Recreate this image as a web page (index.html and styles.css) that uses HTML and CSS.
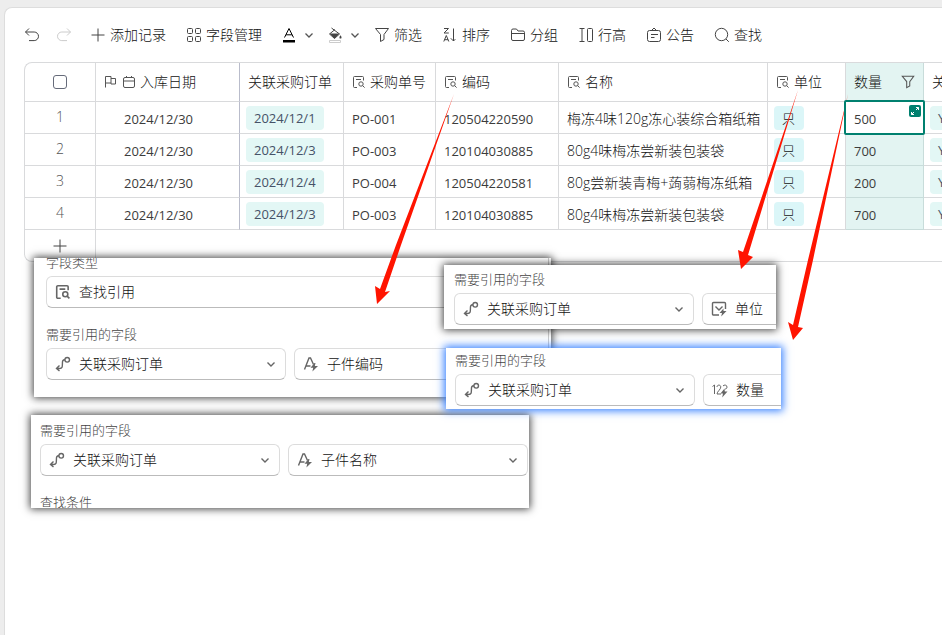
FILE: index.html
```html
<!DOCTYPE html>
<html lang="zh-CN">
<head>
    <meta charset="UTF-8">
    <meta name="viewport" content="width=device-width, initial-scale=1.0">
    <title>入库记录</title>
    <link rel="stylesheet" href="styles.css">
</head>
<body>
    <svg class="sprite" aria-hidden="true">
        <symbol id="undo" viewBox="0 0 16 16"><path d="M5 1.500L1.500 5 5 8.500M1.500 5h8.700a4.300 4.300 0 0 1 0 8.600H5"/></symbol>
        <symbol id="redo" viewBox="0 0 16 16"><path d="M11 1.500L14.500 5 11 8.500M14.500 5H5.800a4.300 4.300 0 0 0 0 8.600H11"/></symbol>
        <symbol id="plus" viewBox="0 0 16 16"><path d="M8 1.500v13M1.500 8h13"/></symbol>
        <symbol id="grid" viewBox="0 0 16 16"><rect x="1.500" y="1.500" width="5" height="5" rx="1"/><rect x="9.500" y="1.500" width="5" height="5" rx="1"/><rect x="1.500" y="9.500" width="5" height="5" rx="1"/><rect x="9.500" y="9.500" width="5" height="5" rx="1"/></symbol>
        <symbol id="font" viewBox="0 0 16 16"><path d="M2.500 10.500L7 1.500l4.500 9M4 7.800h6"/><path class="solid" d="M1 13h12v2.500H1z"/></symbol>
        <symbol id="fill" viewBox="0 0 16 16"><path d="M3.500 1l8 6-5 4.500L1.500 7l5.500-4.500"/><path class="solid" d="M1.500 6.500h10l-5 5zM12.500 8.200c1.600 2 1.200 3.400 0 3.400s-1.600-1.400 0-3.400z"/><path class="pale" d="M1.500 13.500h11v2h-11z"/></symbol>
        <symbol id="chevron" viewBox="0 0 14 14"><path d="M3.500 5.500L7 9l3.500-3.500"/></symbol>
        <symbol id="funnel" viewBox="0 0 16 16"><path d="M1.500 1.500h13l-4.500 6v5L6.500 14.500v-7z"/></symbol>
        <symbol id="sort" viewBox="0 0 16 16"><path d="M2 1.500h4.500L2 6h4.800M1.800 14.500l2.500-6 2.500 6M2.600 12.700h3.500M11.500 1.500v12.500M8.800 11.300l2.700 2.700 1.800-1.800"/></symbol>
        <symbol id="folder" viewBox="0 0 16 16"><path d="M1.500 12V3.500a1.500 1.500 0 0 1 1.500-1.500h3.500l1.500 2h5a1.500 1.500 0 0 1 1.500 1.500V12a1.500 1.500 0 0 1-1.500 1.500H3A1.500 1.500 0 0 1 1.500 12zM1.500 6.500h13"/></symbol>
        <symbol id="height" viewBox="0 0 16 16"><path d="M1.500 1.500h5M1.500 14.500h5M4 1.500v13"/><rect x="9.500" y="1.500" width="5" height="13" rx="1"/></symbol>
        <symbol id="notice" viewBox="0 0 16 16"><rect x="1.500" y="3.500" width="13" height="11" rx="2"/><path d="M5.500 3.500L8 1l2.500 2.500M5 7.500h7M5 10.500h3.500"/></symbol>
        <symbol id="search" viewBox="0 0 16 16"><circle cx="7.500" cy="7.500" r="6.200"/><path d="M12 12l2.800 2.800"/></symbol>
        <symbol id="flag" viewBox="0 0 14 14"><path d="M1.500 12.500v-11h5.500v6.500H1.500M7 3.500h4.500v5.500H7V8"/></symbol>
        <symbol id="calendar" viewBox="0 0 14 14"><rect x="1.500" y="2.500" width="11" height="10" rx="1.500"/><path d="M1.500 6h11M4.500 1v2M9.500 1v2"/></symbol>
        <symbol id="lookup" viewBox="0 0 14 14"><path d="M5 12.500H2.500a1 1 0 0 1-1-1v-9a1 1 0 0 1 1-1h8a1 1 0 0 1 1 1v3M4 4.500h5"/><circle cx="9" cy="9" r="2.200"/><path d="M10.600 10.600l2 2"/></symbol>
        <symbol id="link" viewBox="0 0 16 16"><circle cx="12.200" cy="3.800" r="2.300"/><path d="M10 3.800c-2.600 0-2.600 1.500-2.600 4.200s0 4.500-2.800 4.500H1.500M4.500 9.500l-3 3 3 2.500"/></symbol>
        <symbol id="textref" viewBox="0 0 16 16"><path d="M1.500 13.500L6 2h1.500l3 6.500M3 10h4.500"/><path class="solid" d="M11.500 7l-4 4.800h2.700l-.8 3.700 5.600-5.500h-3.200l.7-3z"/></symbol>
        <symbol id="optref" viewBox="0 0 16 16"><path d="M8 14H2.500a1 1 0 0 1-1-1V2.500a1 1 0 0 1 1-1h11a1 1 0 0 1 1 1V8M4.500 5.500l3.500 3.500 3.500-3.500"/><path class="solid" d="M12.500 7.500l-4 4.500h2.500l-.8 3.500 5.300-5.500h-3z"/></symbol>
        <symbol id="numref" viewBox="0 0 16 16"><path d="M.5 4.500L2.500 3v9M5 5c0-2.500 3.800-2.500 3.800 0C8.800 7.500 5 9.500 5 12h4M11 4c1-1.500 4-1.200 4 1 0 1.500-1 2-2 2"/><path class="solid" d="M12.500 6.500l-4 5h2.500l-.8 4 5.300-6h-2.700z"/></symbol>
        <symbol id="expand" viewBox="0 0 12 12"><path d="M7 2.500h2.500V5M9.500 2.500L7 5M5 9.500H2.500V7M2.500 9.500L5 7"/></symbol>
    </svg>

    <main class="panel">
        <div class="toolbar">
            <div class="history">
                <button class="tool" aria-label="撤销"><svg class="icon"><use href="#undo"/></svg></button>
                <button class="tool" aria-label="重做" disabled><svg class="icon"><use href="#redo"/></svg></button>
            </div>
            <button class="tool"><svg class="icon"><use href="#plus"/></svg>添加记录</button>
            <button class="tool"><svg class="icon"><use href="#grid"/></svg>字段管理</button>
            <button class="tool color" aria-label="字体颜色"><svg class="icon black"><use href="#font"/></svg><svg class="icon-sm"><use href="#chevron"/></svg></button>
            <button class="tool color" aria-label="填充颜色"><svg class="icon"><use href="#fill"/></svg><svg class="icon-sm"><use href="#chevron"/></svg></button>
            <button class="tool"><svg class="icon"><use href="#funnel"/></svg>筛选</button>
            <button class="tool"><svg class="icon"><use href="#sort"/></svg>排序</button>
            <button class="tool"><svg class="icon"><use href="#folder"/></svg>分组</button>
            <button class="tool"><svg class="icon"><use href="#height"/></svg>行高</button>
            <button class="tool"><svg class="icon"><use href="#notice"/></svg>公告</button>
            <button class="tool"><svg class="icon"><use href="#search"/></svg>查找</button>
        </div>

        <div class="sheet">
            <table>
                <colgroup>
                    <col class="w-index"><col class="w-date"><col class="w-order"><col class="w-po"><col class="w-code"><col class="w-name"><col class="w-unit"><col class="w-qty"><col class="w-more">
                </colgroup>
                <thead>
                    <tr>
                        <th class="index"><input type="checkbox" aria-label="全选"></th>
                        <th class="frozen"><div class="head"><svg class="icon-sm"><use href="#flag"/></svg><svg class="icon-sm"><use href="#calendar"/></svg>入库日期</div></th>
                        <th><div class="head">关联采购订单</div></th>
                        <th><div class="head"><svg class="icon-sm"><use href="#lookup"/></svg>采购单号</div></th>
                        <th><div class="head"><svg class="icon-sm"><use href="#lookup"/></svg>编码</div></th>
                        <th><div class="head"><svg class="icon-sm"><use href="#lookup"/></svg>名称</div></th>
                        <th><div class="head"><svg class="icon-sm"><use href="#lookup"/></svg>单位</div></th>
                        <th class="qty"><div class="head spread">数量<svg class="icon-sm"><use href="#funnel"/></svg></div></th>
                        <th><div class="head">关</div></th>
                    </tr>
                </thead>
                <tbody>
                    <tr>
                        <td class="index">1</td>
                        <td class="date frozen">2024/12/30</td>
                        <td class="tags"><span class="chip">2024/12/1</span></td>
                        <td class="num">PO-001</td>
                        <td class="num">120504220590</td>
                        <td>梅冻4味120g冻心装综合箱纸箱</td>
                        <td class="tags"><span class="chip unit">只</span></td>
                        <td class="num qty selected">500<button class="expand" aria-label="展开"><svg><use href="#expand"/></svg></button></td>
                        <td class="tags"><span class="chip">Y</span></td>
                    </tr>
                    <tr>
                        <td class="index">2</td>
                        <td class="date frozen">2024/12/30</td>
                        <td class="tags"><span class="chip">2024/12/3</span></td>
                        <td class="num">PO-003</td>
                        <td class="num">120104030885</td>
                        <td>80g4味梅冻尝新装包装袋</td>
                        <td class="tags"><span class="chip unit">只</span></td>
                        <td class="num qty">700</td>
                        <td class="tags"><span class="chip">Y</span></td>
                    </tr>
                    <tr>
                        <td class="index">3</td>
                        <td class="date frozen">2024/12/30</td>
                        <td class="tags"><span class="chip">2024/12/4</span></td>
                        <td class="num">PO-004</td>
                        <td class="num">120504220581</td>
                        <td>80g尝新装青梅+蒟蒻梅冻纸箱</td>
                        <td class="tags"><span class="chip unit">只</span></td>
                        <td class="num qty">200</td>
                        <td class="tags"><span class="chip">Y</span></td>
                    </tr>
                    <tr>
                        <td class="index">4</td>
                        <td class="date frozen">2024/12/30</td>
                        <td class="tags"><span class="chip">2024/12/3</span></td>
                        <td class="num">PO-003</td>
                        <td class="num">120104030885</td>
                        <td>80g4味梅冻尝新装包装袋</td>
                        <td class="tags"><span class="chip unit">只</span></td>
                        <td class="num qty">700</td>
                        <td class="tags"><span class="chip">Y</span></td>
                    </tr>
                </tbody>
                <tfoot>
                    <tr>
                        <td class="index"><button class="add" aria-label="新增一行"><svg class="icon"><use href="#plus"/></svg></button></td>
                        <td colspan="8"></td>
                    </tr>
                </tfoot>
            </table>
        </div>
    </main>

    <!-- floating notes that show how each field is set up -->
    <section class="note note-code">
        <div class="note-body">
            <label class="caption" for="type">字段类型</label>
            <div class="row">
                <div class="picker wide"><svg class="icon"><use href="#lookup"/></svg><select id="type"><option>查找引用</option></select></div>
            </div>
            <label class="caption second" for="code-table">需要引用的字段</label>
            <div class="row">
                <div class="picker"><svg class="icon"><use href="#link"/></svg><select id="code-table"><option>关联采购订单</option></select><svg class="icon-sm"><use href="#chevron"/></svg></div>
                <div class="picker"><svg class="icon"><use href="#textref"/></svg><select aria-label="引用字段"><option>子件编码</option></select><svg class="icon-sm"><use href="#chevron"/></svg></div>
            </div>
        </div>
    </section>

    <section class="note note-name">
        <label class="caption" for="name-table">需要引用的字段</label>
        <div class="row">
            <div class="picker"><svg class="icon"><use href="#link"/></svg><select id="name-table"><option>关联采购订单</option></select><svg class="icon-sm"><use href="#chevron"/></svg></div>
            <div class="picker"><svg class="icon"><use href="#textref"/></svg><select aria-label="引用字段"><option>子件名称</option></select><svg class="icon-sm"><use href="#chevron"/></svg></div>
        </div>
        <div class="caption second">查找条件</div>
    </section>

    <section class="note note-unit">
        <label class="caption" for="unit-table">需要引用的字段</label>
        <div class="row">
            <div class="picker"><svg class="icon"><use href="#link"/></svg><select id="unit-table"><option>关联采购订单</option></select><svg class="icon-sm"><use href="#chevron"/></svg></div>
            <div class="picker"><svg class="icon"><use href="#optref"/></svg><select aria-label="引用字段"><option>单位</option></select></div>
        </div>
    </section>

    <section class="note note-qty">
        <label class="caption" for="qty-table">需要引用的字段</label>
        <div class="row">
            <div class="picker"><svg class="icon"><use href="#link"/></svg><select id="qty-table"><option>关联采购订单</option></select><svg class="icon-sm"><use href="#chevron"/></svg></div>
            <div class="picker"><svg class="icon thin"><use href="#numref"/></svg><select aria-label="引用字段"><option>数量</option></select></div>
        </div>
    </section>

    <svg class="arrows" width="942" height="400" aria-hidden="true">
        <path d="M454 94L396 245 380 289 375 286 377 304 390 291 385 292 401 245z"/>
        <path d="M798 90L743 252 738 250 741 269 753 257 748 255z"/>
        <path d="M848 94L808 260 793 325 788 322 793 340 803 328 798 327 813 260z"/>
    </svg>
</body>
</html>
```
FILE: styles.css
```css
* {
    box-sizing: border-box;
}
body {
    margin: 0;
    position: relative;
    min-height: 100vh;
    overflow: hidden;
    background: #ededed;
    color: #111;
    font-family: "Open Sans", "Noto Sans CJK SC", sans-serif;
    font-size: 14px;
    font-weight: 300;
    line-height: 20px;
}
button, select, input {
    margin: 0;
    padding: 0;
    border: none;
    background: none;
    color: inherit;
    font: inherit;
}
.sprite {
    position: absolute;
    width: 0;
    height: 0;
}
svg {
    flex: none;
    fill: none;
    stroke: currentColor;
    stroke-width: 1;
}
.solid {
    fill: currentColor;
    stroke: none;
}
.pale {
    stroke: #ccc;
}
.icon {
    width: 16px;
    height: 16px;
    color: #444;
}
.icon-sm {
    width: 14px;
    height: 14px;
    color: #555;
}
.black {
    color: #000;
}

.panel {
    margin: 7px 0 0 4px;
    min-height: calc(100vh - 7px);
    padding-left: 19px;
    border: 1px solid #ddd;
    border-right: none;
    border-bottom: none;
    border-radius: 8px 0 0 0;
    background: #fff;
}

/* toolbar */
.toolbar {
    display: flex;
    align-items: center;
    gap: 20px;
    height: 54px;
}
.history {
    display: flex;
    gap: 16px;
    margin-right: -2px;
}
.tool {
    display: flex;
    align-items: center;
    gap: 4px;
    white-space: nowrap;
}
.tool:disabled .icon {
    color: #ccc;
}
.tool.color {
    margin-right: -8px;
}
.tool .icon-sm {
    stroke-width: 1.3;
}

/* table */
.sheet {
    overflow: hidden;
    border: 1px solid #d9dadc;
    border-right: none;
    border-radius: 8px 0 0 8px;
}
table {
    width: 1020px;
    table-layout: fixed;
    border-spacing: 0;
}
.w-index { width: 71px; }
.w-date { width: 144px; }
.w-order { width: 104px; }
.w-po { width: 92px; }
.w-code { width: 123px; }
.w-name { width: 209px; }
.w-unit { width: 78px; }
.w-qty { width: 78px; }
th, td {
    position: relative;
    height: 32px;
    padding: 2px 0 0 8px;
    border-right: 1px solid #d9dadc;
    border-bottom: 1px solid #d9dadc;
    text-align: left;
    font-weight: 300;
    white-space: nowrap;
}
th {
    height: 39px;
    padding-top: 0;
}
.frozen {
    border-right-color: #b9bccb;
}
.head {
    display: flex;
    align-items: center;
    gap: 4px;
}
.spread {
    justify-content: space-between;
    padding-right: 8px;
}
.spread .icon-sm {
    stroke-width: 1.2;
}
.index {
    padding: 0;
    text-align: center;
    color: #555;
}
tbody .index {
    padding-bottom: 1px;
}
.index input {
    appearance: none;
    display: block;
    width: 14px;
    height: 14px;
    margin: 0 auto;
    border: 1px solid #666b7a;
    border-radius: 3px;
}
.num, .date {
    color: #3c3c3c;
    font-size: 13px;
    font-weight: 400;
}
.date {
    padding-left: 28px;
}
.tags {
    padding: 1px 0 0 6px;
}
.chip {
    display: block;
    width: 78px;
    height: 24px;
    padding: 0 8px;
    border-radius: 4px;
    background: #e3f7f5;
    color: #465268;
    font-size: 13px;
    font-weight: 400;
    line-height: 24px;
}
.chip.unit {
    width: 30px;
    background: #dbf6f8;
    color: #111;
    font-weight: 300;
}
.qty {
    border-color: #c8dcda;
    background: #e3f4f2;
}
.selected {
    z-index: 1;
    background: #fff;
}
.selected::after {
    content: "";
    position: absolute;
    inset: -2px;
    border: 2px solid #00806f;
    border-radius: 2px;
    pointer-events: none;
}
.expand {
    position: absolute;
    top: 3px;
    right: 2px;
    width: 12px;
    height: 12px;
    border-radius: 2px;
    background: #00806f;
    color: #fff;
}
.expand svg {
    display: block;
    width: 12px;
    height: 12px;
}
tfoot td {
    height: 31px;
    border-bottom: none;
}
tfoot td + td {
    border-right: none;
}
.add {
    display: block;
    margin: 0 auto;
}
.add svg {
    display: block;
}

/* notes */
.note {
    position: absolute;
    overflow: hidden;
    background: #fff;
    box-shadow: 0 0 8px 1px rgba(0, 0, 0, 0.75);
}
.note-code {
    left: 34px;
    top: 258px;
    width: 517px;
    height: 139px;
}
.note-body {
    width: 515px;
    height: 145px;
    margin-top: -6px;
    padding-left: 12px;
    border-right: 1px solid #ccc;
}
.note-name {
    left: 31px;
    top: 415px;
    width: 498px;
    height: 93px;
    padding: 5px 0 0 9px;
}
.note-unit {
    left: 444px;
    top: 265px;
    width: 332px;
    height: 64px;
    padding: 4px 0 0 10px;
}
.note-qty {
    left: 446px;
    top: 348px;
    width: 335px;
    height: 61px;
    padding: 2px 0 0 9px;
    box-shadow: 0 0 8px 2px rgba(50, 125, 255, 0.95);
}
.caption {
    display: block;
    height: 20px;
    color: #444;
    font-size: 13px;
}
.second {
    margin-top: 16px;
}
.row {
    display: flex;
    gap: 8px;
    margin-top: 4px;
}
.picker {
    flex: none;
    display: flex;
    align-items: center;
    gap: 8px;
    width: 240px;
    height: 32px;
    padding: 0 7px 0 8px;
    border: 1px solid #dcdcdc;
    border-bottom-color: #bbb;
    border-radius: 6px;
}
.picker.wide {
    width: 520px;
}
.picker svg {
    color: #666;
    stroke-width: 1.4;
}
.picker .thin {
    stroke-width: 1;
}
.picker select {
    appearance: none;
    flex: 1;
    min-width: 0;
}

.arrows {
    position: absolute;
    left: 0;
    top: 0;
    fill: #ff1400;
    stroke: none;
    pointer-events: none;
}
```
